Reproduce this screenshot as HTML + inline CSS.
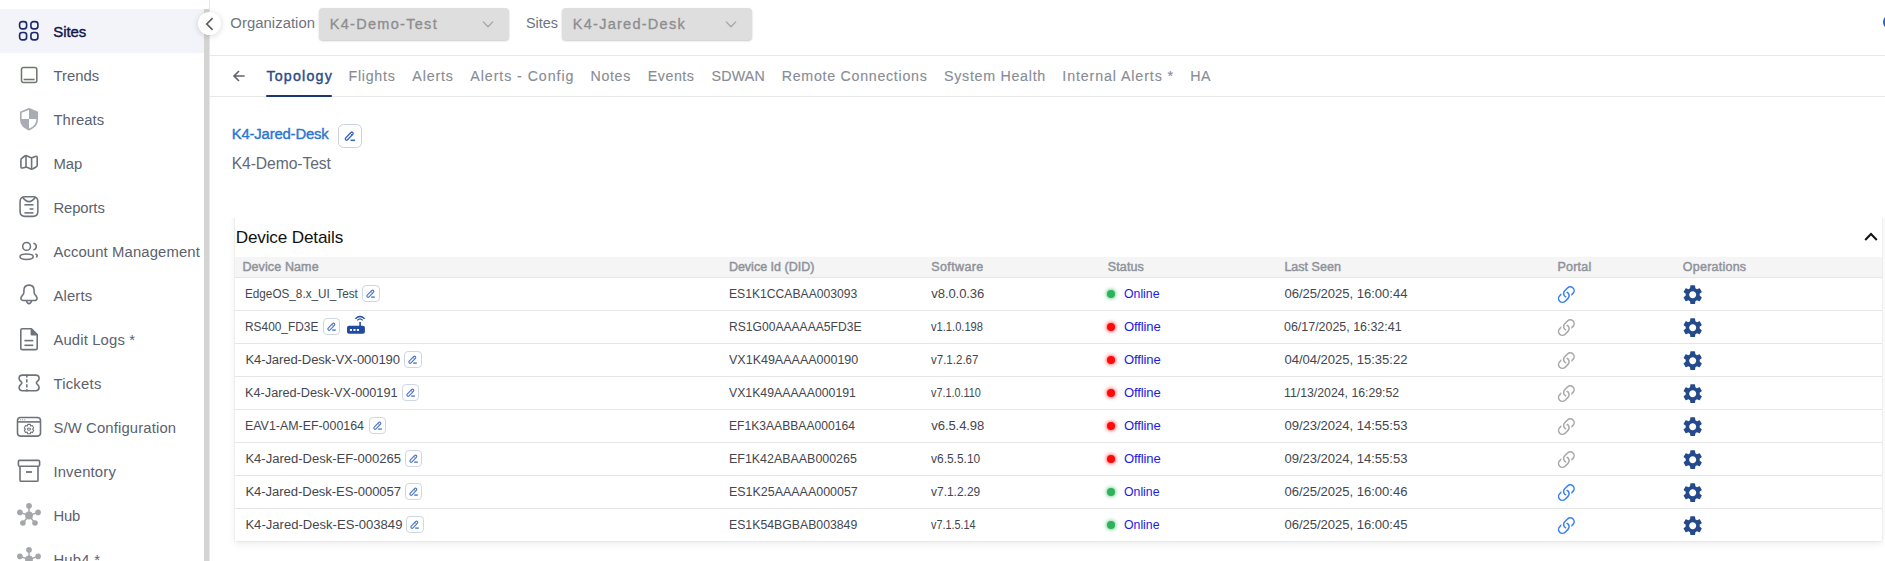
<!DOCTYPE html>
<html><head><meta charset="utf-8"><style>
html,body{margin:0;padding:0;width:1885px;height:561px;overflow:hidden;background:#fff;}
body{position:relative;font-family:"Liberation Sans",sans-serif;}
.t{position:absolute;white-space:nowrap;line-height:1;}
</style></head><body>
<div style="position:absolute;left:0;top:9px;width:204px;height:44px;background:#f3f4f9"></div>
<div style="position:absolute;left:209px;top:0;width:1px;height:561px;background:#e6e6e6"></div>
<div style="position:absolute;left:204px;top:9px;width:5px;height:552px;background:#d4d4d4"></div>
<div class="t" style="left:53.30px;top:24.52px;font-size:14.97px;color:#15154a;-webkit-text-stroke:0.4px #15154a;letter-spacing:-0.071px;">Sites</div>
<div class="t" style="left:53.40px;top:68.65px;font-size:14.83px;color:#5b616e;letter-spacing:0.022px;">Trends</div>
<div class="t" style="left:53.40px;top:112.65px;font-size:14.83px;color:#5b616e;letter-spacing:0.091px;">Threats</div>
<div class="t" style="left:53.40px;top:156.65px;font-size:14.83px;color:#5b616e;letter-spacing:-0.019px;">Map</div>
<div class="t" style="left:53.40px;top:200.65px;font-size:14.83px;color:#5b616e;letter-spacing:-0.085px;">Reports</div>
<div class="t" style="left:53.40px;top:244.65px;font-size:14.83px;color:#5b616e;letter-spacing:0.129px;">Account Management</div>
<div class="t" style="left:53.40px;top:288.65px;font-size:14.83px;color:#5b616e;letter-spacing:0.181px;">Alerts</div>
<div class="t" style="left:53.40px;top:332.65px;font-size:14.83px;color:#5b616e;letter-spacing:0.150px;">Audit Logs *</div>
<div class="t" style="left:53.40px;top:376.65px;font-size:14.83px;color:#5b616e;letter-spacing:0.250px;">Tickets</div>
<div class="t" style="left:53.40px;top:420.65px;font-size:14.83px;color:#5b616e;letter-spacing:0.144px;">S/W Configuration</div>
<div class="t" style="left:53.40px;top:464.65px;font-size:14.83px;color:#5b616e;letter-spacing:0.178px;">Inventory</div>
<div class="t" style="left:53.40px;top:508.65px;font-size:14.83px;color:#5b616e;letter-spacing:-0.198px;">Hub</div>
<div class="t" style="left:53.40px;top:552.65px;font-size:14.83px;color:#5b616e;letter-spacing:0.254px;">Hub4 *</div>
<svg style="position:absolute;left:18px;top:20px" width="22" height="22" viewBox="0 0 22 22" fill="none" stroke="#1f2870" stroke-width="1.65"><rect x="1.6" y="1.6" width="7" height="7.3" rx="2.6"/><rect x="12.9" y="1.6" width="7" height="7.3" rx="2.6"/><rect x="1.6" y="12.5" width="7" height="7.4" rx="2.6"/><rect x="12.9" y="12.5" width="7" height="7.4" rx="2.6"/></svg>
<svg style="position:absolute;left:19px;top:65px" width="20" height="20" viewBox="0 0 20 20" fill="none" stroke="#6f786f" stroke-width="1.55"><rect x="2.5" y="2.5" width="15.3" height="15" rx="2"/><line x1="4.6" y1="14.5" x2="15.6" y2="14.5"/></svg>
<svg style="position:absolute;left:19px;top:107px" width="20" height="24" viewBox="0 0 20 24"><path d="M10 1.9 L18.2 5.2 V12 C18.2 17 14.6 20.8 10 22.6 C5.4 20.8 1.8 17 1.8 12 V5.2 Z" fill="none" stroke="#a9acb2" stroke-width="1.7" stroke-linejoin="round"/><path d="M10 1.9 L18.2 5.2 V12 H10 Z" fill="#a9acb2"/><path d="M10 12 H1.8 C1.8 17 5.4 20.8 10 22.6 Z" fill="#a9acb2"/></svg>
<svg style="position:absolute;left:19px;top:153px" width="20" height="20" viewBox="0 0 20 20" fill="none" stroke="#6e737b" stroke-width="1.6" stroke-linejoin="round"><path d="M1.9 7 Q1.9 5.6 3.2 5 L5.8 3 Q7 2.3 8.2 3 L11.4 4.4 Q12.6 5 13.8 4.4 L16.2 3.4 Q18.2 2.8 18.2 4.6 V12.4 Q18.2 13.4 17 14 L14 15.8 Q12.6 16.4 11.2 15.8 L8.4 14.4 Q7 14 5.6 14.4 L3.6 15 Q1.9 15.4 1.9 13.6 Z"/><line x1="7" y1="2.6" x2="7" y2="14.2"/><line x1="12.6" y1="4.7" x2="12.6" y2="16.1"/></svg>
<svg style="position:absolute;left:19px;top:195px" width="21" height="24" viewBox="0 0 21 24" fill="none" stroke="#6e737b" stroke-width="1.55"><path d="M6 1.8 H14 Q18.85 1.8 18.85 6.6 V16.5 Q18.85 21.35 14 21.35 H6 Q1.05 21.35 1.05 16.5 V6.6 Q1.05 1.8 6 1.8 Z"/><path d="M3.6 2.2 Q6.8 6.6 10 6.6 Q13.2 6.6 16.4 2.2"/><line x1="5.4" y1="9.8" x2="14.5" y2="9.8"/><line x1="10.5" y1="14" x2="14.5" y2="14"/><line x1="5.4" y1="17.9" x2="14.5" y2="17.9"/></svg>
<svg style="position:absolute;left:19px;top:241px" width="21" height="21" viewBox="0 0 21 21" fill="none" stroke="#6e737b" stroke-width="1.55" stroke-linecap="butt"><circle cx="7.6" cy="5.4" r="3.9"/><ellipse cx="7.6" cy="15.7" rx="6.6" ry="2.7"/><path d="M14.4 2.3 Q17.3 2.9 17.3 5.6 Q17.3 8.3 14.4 8.9"/><path d="M16.4 12.9 Q19.4 14 17.4 16.4"/></svg>
<svg style="position:absolute;left:19px;top:283px" width="20" height="22" viewBox="0 0 20 22" fill="none" stroke="#6e737b" stroke-width="1.55" stroke-linejoin="round"><path d="M10 2.1 Q15.1 2.1 15.1 7.5 V9.3 Q15.1 10.8 16.4 12.1 Q18.1 13.8 18.1 15.2 Q18.1 17.5 15.4 17.5 H4.6 Q1.9 17.5 1.9 15.2 Q1.9 13.8 3.6 12.1 Q4.9 10.8 4.9 9.3 V7.5 Q4.9 2.1 10 2.1 Z"/><path d="M7.4 17.8 Q8.2 20.6 10 20.6 Q11.8 20.6 12.6 17.8"/></svg>
<svg style="position:absolute;left:19px;top:327px" width="20" height="24" viewBox="0 0 20 24" fill="none" stroke="#6e737b" stroke-width="1.6" stroke-linejoin="round"><path d="M3.2 1.8 H12.4 L18.2 7.6 V21.2 Q18.2 22.6 16.8 22.6 H3.2 Q1.8 22.6 1.8 21.2 V3.2 Q1.8 1.8 3.2 1.8 Z"/><path d="M12.4 1.8 V7.6 H18.2" fill="#6e737b"/><line x1="5.4" y1="13.6" x2="14.3" y2="13.6"/><line x1="5.4" y1="18.3" x2="14.3" y2="18.3"/></svg>
<svg style="position:absolute;left:17px;top:373px" width="24" height="20" viewBox="0 0 24 20" fill="none" stroke="#6e737b" stroke-width="1.6" stroke-linejoin="round"><path d="M5.5 2.1 H18.7 Q22.1 2.1 22.1 5.2 Q22.1 6.9 20.6 8.2 Q19.4 9.2 19.4 9.9 Q19.4 10.6 20.6 11.6 Q22.1 12.9 22.1 14.6 Q22.1 17.7 18.7 17.7 H5.5 Q2.1 17.7 2.1 14.6 Q2.1 12.9 3.6 11.6 Q4.8 10.6 4.8 9.9 Q4.8 9.2 3.6 8.2 Q2.1 6.9 2.1 5.2 Q2.1 2.1 5.5 2.1 Z"/><line x1="9.8" y1="1.3" x2="9.8" y2="18.5" stroke-dasharray="3.1 1.9"/></svg>
<svg style="position:absolute;left:16px;top:416px" width="26" height="23" viewBox="0 0 26 23" fill="none" stroke="#6e737b" stroke-width="1.6"><rect x="1.5" y="1.5" width="23" height="18.6" rx="3"/><line x1="1.5" y1="5.9" x2="24.5" y2="5.9"/><circle cx="4.6" cy="3.7" r="0.55" fill="#6e737b" stroke="none"/><circle cx="6.7" cy="3.7" r="0.55" fill="#6e737b" stroke="none"/><circle cx="8.8" cy="3.7" r="0.55" fill="#6e737b" stroke="none"/><ellipse cx="13" cy="13.1" rx="1.6" ry="1.1" stroke-width="1.1"/><path d="M11.65 8.39 L14.35 8.39 L14.70 10.04 L14.80 10.10 L16.40 9.58 L17.75 11.91 L16.50 13.04 L16.50 13.16 L17.75 14.29 L16.40 16.62 L14.80 16.10 L14.70 16.16 L14.35 17.81 L11.65 17.81 L11.30 16.16 L11.20 16.10 L9.60 16.62 L8.25 14.29 L9.50 13.16 L9.50 13.04 L8.25 11.91 L9.60 9.58 L11.20 10.10 L11.30 10.04 Z" stroke-width="1.05" stroke-linejoin="round"/></svg>
<svg style="position:absolute;left:17px;top:458px" width="24" height="25" viewBox="0 0 24 25" fill="none" stroke="#6e737b" stroke-width="1.6" stroke-linejoin="round"><rect x="1.4" y="2.4" width="21.2" height="5.8" rx="1.2"/><path d="M3 8.2 V22.2 Q3 23.3 4.1 23.3 H19.9 Q21 23.3 21 22.2 V8.2"/><line x1="9" y1="14" x2="15" y2="14" stroke-width="1.8"/></svg>
<svg style="position:absolute;left:16px;top:502px" width="26" height="25" viewBox="0 0 26 25"><g stroke="#a4a6aa" stroke-width="1.5"><line x1="13" y1="13.5" x2="13" y2="3.8"/><line x1="13" y1="13.5" x2="3.9" y2="10.4"/><line x1="13" y1="13.5" x2="22.1" y2="10.4"/><line x1="13" y1="13.5" x2="6.9" y2="21"/><line x1="13" y1="13.5" x2="19" y2="21"/></g><g fill="#a4a6aa"><circle cx="13" cy="13.5" r="3.9"/><circle cx="13" cy="3.8" r="2.9"/><circle cx="3.9" cy="10.4" r="2.8"/><circle cx="22.1" cy="10.4" r="2.8"/><circle cx="6.9" cy="21" r="2.8"/><circle cx="19" cy="21" r="2.8"/></g></svg>
<svg style="position:absolute;left:16px;top:546px" width="26" height="25" viewBox="0 0 26 25"><g stroke="#a4a6aa" stroke-width="1.5"><line x1="13" y1="13.5" x2="13" y2="3.8"/><line x1="13" y1="13.5" x2="3.9" y2="10.4"/><line x1="13" y1="13.5" x2="22.1" y2="10.4"/><line x1="13" y1="13.5" x2="6.9" y2="21"/><line x1="13" y1="13.5" x2="19" y2="21"/></g><g fill="#a4a6aa"><circle cx="13" cy="13.5" r="3.9"/><circle cx="13" cy="3.8" r="2.9"/><circle cx="3.9" cy="10.4" r="2.8"/><circle cx="22.1" cy="10.4" r="2.8"/><circle cx="6.9" cy="21" r="2.8"/><circle cx="19" cy="21" r="2.8"/></g></svg>
<div style="position:absolute;left:197.5px;top:11.8px;width:23px;height:23px;border-radius:50%;background:#fff;box-shadow:0 1px 6px rgba(0,0,0,0.16)"></div>
<svg style="position:absolute;left:203px;top:16px" width="14" height="16" viewBox="0 0 14 16" fill="none" stroke="#5c5c5c" stroke-width="1.7" stroke-linecap="butt"><path d="M9.6 2.2 L3.8 8 L9.6 13.8"/></svg>
<div style="position:absolute;left:210px;top:55px;width:1675px;height:1px;background:#e8e8e8"></div>
<div class="t" style="left:230.30px;top:16.25px;font-size:14.83px;color:#6e747f;letter-spacing:0.059px;">Organization</div>
<div style="position:absolute;left:319px;top:8px;width:190px;height:32px;border-radius:4px;background:#dedede;box-shadow:0 1px 2px rgba(0,0,0,0.22)"></div>
<div class="t" style="left:329.80px;top:16.89px;font-size:14.53px;color:#8d8d8f;-webkit-text-stroke:0.3px #8d8d8f;letter-spacing:1.283px;">K4-Demo-Test</div>
<svg style="position:absolute;left:482px;top:19px" width="12" height="11" viewBox="0 0 12 11" fill="none" stroke="#a6a6a8" stroke-width="1.3"><path d="M1 2.6 L6 7.8 L11 2.6"/></svg>
<div class="t" style="left:525.60px;top:16.25px;font-size:14.83px;color:#6e747f;transform:scaleX(0.9709);transform-origin:0 0;">Sites</div>
<div style="position:absolute;left:562px;top:8px;width:190px;height:32px;border-radius:4px;background:#dedede;box-shadow:0 1px 2px rgba(0,0,0,0.22)"></div>
<div class="t" style="left:572.80px;top:16.89px;font-size:14.53px;color:#8d8d8f;-webkit-text-stroke:0.3px #8d8d8f;letter-spacing:1.256px;">K4-Jared-Desk</div>
<svg style="position:absolute;left:725px;top:19px" width="12" height="11" viewBox="0 0 12 11" fill="none" stroke="#a6a6a8" stroke-width="1.3"><path d="M1 2.6 L6 7.8 L11 2.6"/></svg>
<div style="position:absolute;left:1883px;top:14.5px;width:14.5px;height:14.5px;border-radius:50%;background:#2563c0"></div>
<div style="position:absolute;left:210px;top:96px;width:1675px;height:1px;background:#e8e8e8"></div>
<svg style="position:absolute;left:231.8px;top:69px" width="14" height="14" viewBox="0 0 14 14" fill="none" stroke="#5f636b" stroke-width="1.6"><path d="M12.6 7 H2.2 M7 2 L2 7 L7 12"/></svg>
<div class="t" style="left:266.40px;top:68.54px;font-size:14.24px;color:#2b4b8a;-webkit-text-stroke:0.4px #2b4b8a;letter-spacing:1.198px;">Topology</div>
<div class="t" style="left:348.60px;top:68.54px;font-size:14.24px;color:#878c95;-webkit-text-stroke:0.12px #878c95;letter-spacing:0.708px;">Flights</div>
<div class="t" style="left:412.30px;top:68.54px;font-size:14.24px;color:#878c95;-webkit-text-stroke:0.12px #878c95;letter-spacing:0.858px;">Alerts</div>
<div class="t" style="left:470.30px;top:68.54px;font-size:14.24px;color:#878c95;-webkit-text-stroke:0.12px #878c95;letter-spacing:0.926px;">Alerts - Config</div>
<div class="t" style="left:590.60px;top:68.54px;font-size:14.24px;color:#878c95;-webkit-text-stroke:0.12px #878c95;letter-spacing:0.623px;">Notes</div>
<div class="t" style="left:647.80px;top:68.54px;font-size:14.24px;color:#878c95;-webkit-text-stroke:0.12px #878c95;letter-spacing:0.531px;">Events</div>
<div class="t" style="left:711.50px;top:68.54px;font-size:14.24px;color:#878c95;-webkit-text-stroke:0.12px #878c95;letter-spacing:0.176px;">SDWAN</div>
<div class="t" style="left:781.70px;top:68.54px;font-size:14.24px;color:#878c95;-webkit-text-stroke:0.12px #878c95;letter-spacing:0.717px;">Remote Connections</div>
<div class="t" style="left:944.00px;top:68.54px;font-size:14.24px;color:#878c95;-webkit-text-stroke:0.12px #878c95;letter-spacing:0.723px;">System Health</div>
<div class="t" style="left:1062.30px;top:68.54px;font-size:14.24px;color:#878c95;-webkit-text-stroke:0.12px #878c95;letter-spacing:0.888px;">Internal Alerts *</div>
<div class="t" style="left:1190.20px;top:68.54px;font-size:14.24px;color:#878c95;-webkit-text-stroke:0.12px #878c95;letter-spacing:0.512px;">HA</div>
<div style="position:absolute;left:266px;top:95px;width:66px;height:2px;background:#1c3672;border-radius:1px"></div>
<div class="t" style="left:231.70px;top:126.55px;font-size:14.83px;color:#2a76d2;-webkit-text-stroke:0.4px #2a76d2;letter-spacing:-0.155px;">K4-Jared-Desk</div>
<div style="position:absolute;left:337.5px;top:123.5px;width:22px;height:22px;border:1px solid #c9d2e2;border-radius:5.5px;box-sizing:content-box"></div>
<svg style="position:absolute;left:337.5px;top:123.5px" width="25" height="25" viewBox="0 0 25 25" fill="none" stroke="#3a66c4" stroke-width="1.3"><rect x="6.10" y="10.85" width="10.2" height="2.6" rx="1.30" transform="rotate(-46 11.2 12.15)"/><line x1="14.00" y1="10.85" x2="14.00" y2="13.45" transform="rotate(-46 11.2 12.15)" stroke-width="0.9"/><line x1="12.5" y1="16.3" x2="17.1" y2="16.3" stroke-width="1.55"/></svg>
<div class="t" style="left:231.70px;top:155.61px;font-size:15.70px;color:#646977;letter-spacing:-0.092px;">K4-Demo-Test</div>
<div style="position:absolute;left:215px;top:218px;width:1670px;height:343px;overflow:hidden"><div style="position:absolute;left:20px;top:-20px;width:1647px;height:343px;background:#fff;box-shadow:0 0 1.5px rgba(0,0,0,0.14),0 3px 7px rgba(0,0,0,0.08)"></div></div>
<div class="t" style="left:235.70px;top:228.58px;font-size:17.15px;color:#111111;letter-spacing:-0.155px;">Device Details</div>
<svg style="position:absolute;left:1863px;top:230px" width="16" height="12" viewBox="0 0 16 12" fill="none" stroke="#111" stroke-width="2"><path d="M2.2 10 L8 4 L13.8 10"/></svg>
<div style="position:absolute;left:235px;top:257px;width:1647px;height:20px;background:#f5f5f5"></div>
<div style="position:absolute;left:235px;top:277px;width:1647px;height:1px;background:#e6e6e6"></div>
<div class="t" style="left:242.40px;top:260.62px;font-size:12.50px;color:#8e929a;-webkit-text-stroke:0.45px #8e929a;letter-spacing:0.118px;">Device Name</div>
<div class="t" style="left:728.90px;top:260.62px;font-size:12.50px;color:#8e929a;-webkit-text-stroke:0.45px #8e929a;">Device Id (DID)</div>
<div class="t" style="left:931.30px;top:260.62px;font-size:12.50px;color:#8e929a;-webkit-text-stroke:0.45px #8e929a;letter-spacing:0.382px;">Software</div>
<div class="t" style="left:1107.80px;top:260.62px;font-size:12.50px;color:#8e929a;-webkit-text-stroke:0.45px #8e929a;letter-spacing:0.113px;">Status</div>
<div class="t" style="left:1284.40px;top:260.62px;font-size:12.50px;color:#8e929a;-webkit-text-stroke:0.45px #8e929a;letter-spacing:0.026px;">Last Seen</div>
<div class="t" style="left:1557.50px;top:260.62px;font-size:12.50px;color:#8e929a;-webkit-text-stroke:0.45px #8e929a;letter-spacing:0.210px;">Portal</div>
<div class="t" style="left:1682.80px;top:260.62px;font-size:12.50px;color:#8e929a;-webkit-text-stroke:0.45px #8e929a;letter-spacing:0.240px;">Operations</div>
<div style="position:absolute;left:235px;top:310px;width:1647px;height:1px;background:#e6e6e6"></div>
<div class="t" style="left:245.40px;top:287.12px;font-size:13.08px;color:#44464f;transform:scaleX(0.8967);transform-origin:0 0;">EdgeOS_8.x_UI_Test</div>
<div style="position:absolute;left:362.4px;top:285.2px;width:15.3px;height:15.3px;border:1px solid #cfd6e4;border-radius:4px;box-sizing:content-box"></div>
<svg style="position:absolute;left:362.4px;top:285.2px" width="18" height="18" viewBox="0 0 18 18" fill="none" stroke="#4d77c6" stroke-width="1.15"><rect x="3.90" y="7.45" width="8.8" height="2.5" rx="1.25" transform="rotate(-46 8.3 8.7)"/><line x1="10.40" y1="7.45" x2="10.40" y2="9.95" transform="rotate(-46 8.3 8.7)" stroke-width="0.9"/><line x1="9.2" y1="12.1" x2="12.8" y2="12.1" stroke-width="1.4"/></svg>
<div class="t" style="left:728.90px;top:287.12px;font-size:13.08px;color:#44464f;transform:scaleX(0.9286);transform-origin:0 0;">ES1K1CCABAA003093</div>
<div class="t" style="left:931.30px;top:287.12px;font-size:13.08px;color:#44464f;letter-spacing:-0.102px;">v8.0.0.36</div>
<div style="position:absolute;left:1107px;top:290px;width:8px;height:8px;border-radius:50%;background:#2eb35a;box-shadow:0 0 4px #2eb35a"></div>
<div class="t" style="left:1123.90px;top:287.12px;font-size:13.08px;color:#1b1be6;transform:scaleX(0.9389);transform-origin:0 0;">Online</div>
<div class="t" style="left:1284.40px;top:287.12px;font-size:13.08px;color:#44464f;letter-spacing:-0.029px;">06/25/2025, 16:00:44</div>
<svg style="position:absolute;left:1554.2px;top:282.5px" width="24.7" height="24.7" viewBox="0 0 16 16" fill="#3b82f0"><path d="M4.715 6.542 3.343 7.914a3 3 0 1 0 4.243 4.243l1.828-1.829A3 3 0 0 0 8.586 5.5L8 6.086a1 1 0 0 0-.154.199 2 2 0 0 1 .861 3.337L6.88 11.45a2 2 0 1 1-2.83-2.83l.793-.792a4 4 0 0 1-.128-1.287z"/><path d="M6.586 4.672A3 3 0 0 0 7.414 9.5l.775-.776a2 2 0 0 1-.896-3.346L9.12 3.55a2 2 0 1 1 2.83 2.83l-.793.792c.112.42.155.855.128 1.287l1.372-1.372a3 3 0 1 0-4.243-4.243z"/></svg>
<svg style="position:absolute;left:1680.6px;top:282.9px" width="23.4" height="23.4" viewBox="0 0 24 24"><path fill="#244a8c" d="M19.14 12.94c.04-.3.06-.61.06-.94 0-.32-.02-.64-.07-.94l2.03-1.58a.49.49 0 0 0 .12-.61l-1.92-3.32a.488.488 0 0 0-.59-.22l-2.39.96c-.5-.38-1.03-.7-1.62-.94l-.36-2.54a.484.484 0 0 0-.48-.41h-3.84c-.24 0-.43.17-.47.41l-.36 2.54c-.59.24-1.13.57-1.62.94l-2.39-.96c-.22-.08-.47 0-.59.22L2.74 8.87c-.12.21-.08.47.12.61l2.03 1.58c-.05.3-.09.63-.09.94s.02.64.07.94l-2.03 1.58a.49.49 0 0 0-.12.61l1.92 3.32c.12.22.37.29.59.22l2.39-.96c.5.38 1.03.7 1.62.94l.36 2.54c.05.24.24.41.48.41h3.84c.24 0 .44-.17.47-.41l.36-2.54c.59-.24 1.13-.56 1.62-.94l2.39.96c.22.08.47 0 .59-.22l1.92-3.32c.12-.22.07-.47-.12-.61l-2.01-1.58zM12 15.6c-1.98 0-3.6-1.62-3.6-3.6s1.62-3.6 3.6-3.6 3.6 1.62 3.6 3.6-1.62 3.6-3.6 3.6z"/></svg>
<div style="position:absolute;left:235px;top:343px;width:1647px;height:1px;background:#e6e6e6"></div>
<div class="t" style="left:245.40px;top:320.12px;font-size:13.08px;color:#44464f;transform:scaleX(0.9094);transform-origin:0 0;">RS400_FD3E</div>
<div style="position:absolute;left:322.8px;top:318.2px;width:15.3px;height:15.3px;border:1px solid #cfd6e4;border-radius:4px;box-sizing:content-box"></div>
<svg style="position:absolute;left:322.8px;top:318.2px" width="18" height="18" viewBox="0 0 18 18" fill="none" stroke="#4d77c6" stroke-width="1.15"><rect x="3.90" y="7.45" width="8.8" height="2.5" rx="1.25" transform="rotate(-46 8.3 8.7)"/><line x1="10.40" y1="7.45" x2="10.40" y2="9.95" transform="rotate(-46 8.3 8.7)" stroke-width="0.9"/><line x1="9.2" y1="12.1" x2="12.8" y2="12.1" stroke-width="1.4"/></svg>
<svg style="position:absolute;left:346px;top:315px" width="20" height="20" viewBox="0 0 20 20"><rect x="1" y="10.8" width="17.9" height="8" rx="2" fill="#1f4aa0"/><rect x="13.3" y="7" width="1.6" height="4.5" fill="#1f4aa0"/><path d="M9.4 3.7 Q14 -0.6 18.6 3.7" stroke="#1f4aa0" stroke-width="1.3" fill="none"/><path d="M11.3 5.3 Q14 2.6 16.7 5.3" stroke="#1f4aa0" stroke-width="1.2" fill="none"/><rect x="3.9" y="14" width="2.1" height="1.9" fill="#fff"/><rect x="7.4" y="14" width="2.1" height="1.9" fill="#fff"/><rect x="10.9" y="14" width="2.1" height="1.9" fill="#fff"/></svg>
<div class="t" style="left:728.90px;top:320.12px;font-size:13.08px;color:#44464f;transform:scaleX(0.9250);transform-origin:0 0;">RS1G00AAAAAA5FD3E</div>
<div class="t" style="left:931.30px;top:320.12px;font-size:13.08px;color:#44464f;transform:scaleX(0.8512);transform-origin:0 0;">v1.1.0.198</div>
<div style="position:absolute;left:1107px;top:323px;width:8px;height:8px;border-radius:50%;background:#ff0a0a;box-shadow:0 0 4px #ff0a0a"></div>
<div class="t" style="left:1123.90px;top:320.12px;font-size:13.08px;color:#1b1be6;letter-spacing:-0.111px;">Offline</div>
<div class="t" style="left:1284.40px;top:320.12px;font-size:13.08px;color:#44464f;transform:scaleX(0.9511);transform-origin:0 0;">06/17/2025, 16:32:41</div>
<svg style="position:absolute;left:1554.2px;top:315.5px" width="24.7" height="24.7" viewBox="0 0 16 16" fill="#a8a8a8"><path d="M4.715 6.542 3.343 7.914a3 3 0 1 0 4.243 4.243l1.828-1.829A3 3 0 0 0 8.586 5.5L8 6.086a1 1 0 0 0-.154.199 2 2 0 0 1 .861 3.337L6.88 11.45a2 2 0 1 1-2.83-2.83l.793-.792a4 4 0 0 1-.128-1.287z"/><path d="M6.586 4.672A3 3 0 0 0 7.414 9.5l.775-.776a2 2 0 0 1-.896-3.346L9.12 3.55a2 2 0 1 1 2.83 2.83l-.793.792c.112.42.155.855.128 1.287l1.372-1.372a3 3 0 1 0-4.243-4.243z"/></svg>
<svg style="position:absolute;left:1680.6px;top:315.9px" width="23.4" height="23.4" viewBox="0 0 24 24"><path fill="#244a8c" d="M19.14 12.94c.04-.3.06-.61.06-.94 0-.32-.02-.64-.07-.94l2.03-1.58a.49.49 0 0 0 .12-.61l-1.92-3.32a.488.488 0 0 0-.59-.22l-2.39.96c-.5-.38-1.03-.7-1.62-.94l-.36-2.54a.484.484 0 0 0-.48-.41h-3.84c-.24 0-.43.17-.47.41l-.36 2.54c-.59.24-1.13.57-1.62.94l-2.39-.96c-.22-.08-.47 0-.59.22L2.74 8.87c-.12.21-.08.47.12.61l2.03 1.58c-.05.3-.09.63-.09.94s.02.64.07.94l-2.03 1.58a.49.49 0 0 0-.12.61l1.92 3.32c.12.22.37.29.59.22l2.39-.96c.5.38 1.03.7 1.62.94l.36 2.54c.05.24.24.41.48.41h3.84c.24 0 .44-.17.47-.41l.36-2.54c.59-.24 1.13-.56 1.62-.94l2.39.96c.22.08.47 0 .59-.22l1.92-3.32c.12-.22.07-.47-.12-.61l-2.01-1.58zM12 15.6c-1.98 0-3.6-1.62-3.6-3.6s1.62-3.6 3.6-3.6 3.6 1.62 3.6 3.6-1.62 3.6-3.6 3.6z"/></svg>
<div style="position:absolute;left:235px;top:376px;width:1647px;height:1px;background:#e6e6e6"></div>
<div class="t" style="left:245.40px;top:353.12px;font-size:13.08px;color:#44464f;letter-spacing:-0.107px;">K4-Jared-Desk-VX-000190</div>
<div style="position:absolute;left:404.3px;top:351.2px;width:15.3px;height:15.3px;border:1px solid #cfd6e4;border-radius:4px;box-sizing:content-box"></div>
<svg style="position:absolute;left:404.3px;top:351.2px" width="18" height="18" viewBox="0 0 18 18" fill="none" stroke="#4d77c6" stroke-width="1.15"><rect x="3.90" y="7.45" width="8.8" height="2.5" rx="1.25" transform="rotate(-46 8.3 8.7)"/><line x1="10.40" y1="7.45" x2="10.40" y2="9.95" transform="rotate(-46 8.3 8.7)" stroke-width="0.9"/><line x1="9.2" y1="12.1" x2="12.8" y2="12.1" stroke-width="1.4"/></svg>
<div class="t" style="left:728.90px;top:353.12px;font-size:13.08px;color:#44464f;transform:scaleX(0.9558);transform-origin:0 0;">VX1K49AAAAA000190</div>
<div class="t" style="left:931.30px;top:353.12px;font-size:13.08px;color:#44464f;transform:scaleX(0.8808);transform-origin:0 0;">v7.1.2.67</div>
<div style="position:absolute;left:1107px;top:356px;width:8px;height:8px;border-radius:50%;background:#ff0a0a;box-shadow:0 0 4px #ff0a0a"></div>
<div class="t" style="left:1123.90px;top:353.12px;font-size:13.08px;color:#1b1be6;letter-spacing:-0.111px;">Offline</div>
<div class="t" style="left:1284.40px;top:353.12px;font-size:13.08px;color:#44464f;letter-spacing:-0.029px;">04/04/2025, 15:35:22</div>
<svg style="position:absolute;left:1554.2px;top:348.5px" width="24.7" height="24.7" viewBox="0 0 16 16" fill="#a8a8a8"><path d="M4.715 6.542 3.343 7.914a3 3 0 1 0 4.243 4.243l1.828-1.829A3 3 0 0 0 8.586 5.5L8 6.086a1 1 0 0 0-.154.199 2 2 0 0 1 .861 3.337L6.88 11.45a2 2 0 1 1-2.83-2.83l.793-.792a4 4 0 0 1-.128-1.287z"/><path d="M6.586 4.672A3 3 0 0 0 7.414 9.5l.775-.776a2 2 0 0 1-.896-3.346L9.12 3.55a2 2 0 1 1 2.83 2.83l-.793.792c.112.42.155.855.128 1.287l1.372-1.372a3 3 0 1 0-4.243-4.243z"/></svg>
<svg style="position:absolute;left:1680.6px;top:348.9px" width="23.4" height="23.4" viewBox="0 0 24 24"><path fill="#244a8c" d="M19.14 12.94c.04-.3.06-.61.06-.94 0-.32-.02-.64-.07-.94l2.03-1.58a.49.49 0 0 0 .12-.61l-1.92-3.32a.488.488 0 0 0-.59-.22l-2.39.96c-.5-.38-1.03-.7-1.62-.94l-.36-2.54a.484.484 0 0 0-.48-.41h-3.84c-.24 0-.43.17-.47.41l-.36 2.54c-.59.24-1.13.57-1.62.94l-2.39-.96c-.22-.08-.47 0-.59.22L2.74 8.87c-.12.21-.08.47.12.61l2.03 1.58c-.05.3-.09.63-.09.94s.02.64.07.94l-2.03 1.58a.49.49 0 0 0-.12.61l1.92 3.32c.12.22.37.29.59.22l2.39-.96c.5.38 1.03.7 1.62.94l.36 2.54c.05.24.24.41.48.41h3.84c.24 0 .44-.17.47-.41l.36-2.54c.59-.24 1.13-.56 1.62-.94l2.39.96c.22.08.47 0 .59-.22l1.92-3.32c.12-.22.07-.47-.12-.61l-2.01-1.58zM12 15.6c-1.98 0-3.6-1.62-3.6-3.6s1.62-3.6 3.6-3.6 3.6 1.62 3.6 3.6-1.62 3.6-3.6 3.6z"/></svg>
<div style="position:absolute;left:235px;top:409px;width:1647px;height:1px;background:#e6e6e6"></div>
<div class="t" style="left:245.40px;top:386.12px;font-size:13.08px;color:#44464f;transform:scaleX(0.9717);transform-origin:0 0;">K4-Jared-Desk-VX-000191</div>
<div style="position:absolute;left:401.9px;top:384.2px;width:15.3px;height:15.3px;border:1px solid #cfd6e4;border-radius:4px;box-sizing:content-box"></div>
<svg style="position:absolute;left:401.9px;top:384.2px" width="18" height="18" viewBox="0 0 18 18" fill="none" stroke="#4d77c6" stroke-width="1.15"><rect x="3.90" y="7.45" width="8.8" height="2.5" rx="1.25" transform="rotate(-46 8.3 8.7)"/><line x1="10.40" y1="7.45" x2="10.40" y2="9.95" transform="rotate(-46 8.3 8.7)" stroke-width="0.9"/><line x1="9.2" y1="12.1" x2="12.8" y2="12.1" stroke-width="1.4"/></svg>
<div class="t" style="left:728.90px;top:386.12px;font-size:13.08px;color:#44464f;transform:scaleX(0.9381);transform-origin:0 0;">VX1K49AAAAA000191</div>
<div class="t" style="left:931.30px;top:386.12px;font-size:13.08px;color:#44464f;transform:scaleX(0.8267);transform-origin:0 0;">v7.1.0.110</div>
<div style="position:absolute;left:1107px;top:389px;width:8px;height:8px;border-radius:50%;background:#ff0a0a;box-shadow:0 0 4px #ff0a0a"></div>
<div class="t" style="left:1123.90px;top:386.12px;font-size:13.08px;color:#1b1be6;letter-spacing:-0.111px;">Offline</div>
<div class="t" style="left:1284.40px;top:386.12px;font-size:13.08px;color:#44464f;transform:scaleX(0.9391);transform-origin:0 0;">11/13/2024, 16:29:52</div>
<svg style="position:absolute;left:1554.2px;top:381.5px" width="24.7" height="24.7" viewBox="0 0 16 16" fill="#a8a8a8"><path d="M4.715 6.542 3.343 7.914a3 3 0 1 0 4.243 4.243l1.828-1.829A3 3 0 0 0 8.586 5.5L8 6.086a1 1 0 0 0-.154.199 2 2 0 0 1 .861 3.337L6.88 11.45a2 2 0 1 1-2.83-2.83l.793-.792a4 4 0 0 1-.128-1.287z"/><path d="M6.586 4.672A3 3 0 0 0 7.414 9.5l.775-.776a2 2 0 0 1-.896-3.346L9.12 3.55a2 2 0 1 1 2.83 2.83l-.793.792c.112.42.155.855.128 1.287l1.372-1.372a3 3 0 1 0-4.243-4.243z"/></svg>
<svg style="position:absolute;left:1680.6px;top:381.9px" width="23.4" height="23.4" viewBox="0 0 24 24"><path fill="#244a8c" d="M19.14 12.94c.04-.3.06-.61.06-.94 0-.32-.02-.64-.07-.94l2.03-1.58a.49.49 0 0 0 .12-.61l-1.92-3.32a.488.488 0 0 0-.59-.22l-2.39.96c-.5-.38-1.03-.7-1.62-.94l-.36-2.54a.484.484 0 0 0-.48-.41h-3.84c-.24 0-.43.17-.47.41l-.36 2.54c-.59.24-1.13.57-1.62.94l-2.39-.96c-.22-.08-.47 0-.59.22L2.74 8.87c-.12.21-.08.47.12.61l2.03 1.58c-.05.3-.09.63-.09.94s.02.64.07.94l-2.03 1.58a.49.49 0 0 0-.12.61l1.92 3.32c.12.22.37.29.59.22l2.39-.96c.5.38 1.03.7 1.62.94l.36 2.54c.05.24.24.41.48.41h3.84c.24 0 .44-.17.47-.41l.36-2.54c.59-.24 1.13-.56 1.62-.94l2.39.96c.22.08.47 0 .59-.22l1.92-3.32c.12-.22.07-.47-.12-.61l-2.01-1.58zM12 15.6c-1.98 0-3.6-1.62-3.6-3.6s1.62-3.6 3.6-3.6 3.6 1.62 3.6 3.6-1.62 3.6-3.6 3.6z"/></svg>
<div style="position:absolute;left:235px;top:442px;width:1647px;height:1px;background:#e6e6e6"></div>
<div class="t" style="left:245.40px;top:419.12px;font-size:13.08px;color:#44464f;transform:scaleX(0.9480);transform-origin:0 0;">EAV1-AM-EF-000164</div>
<div style="position:absolute;left:368.6px;top:417.2px;width:15.3px;height:15.3px;border:1px solid #cfd6e4;border-radius:4px;box-sizing:content-box"></div>
<svg style="position:absolute;left:368.6px;top:417.2px" width="18" height="18" viewBox="0 0 18 18" fill="none" stroke="#4d77c6" stroke-width="1.15"><rect x="3.90" y="7.45" width="8.8" height="2.5" rx="1.25" transform="rotate(-46 8.3 8.7)"/><line x1="10.40" y1="7.45" x2="10.40" y2="9.95" transform="rotate(-46 8.3 8.7)" stroke-width="0.9"/><line x1="9.2" y1="12.1" x2="12.8" y2="12.1" stroke-width="1.4"/></svg>
<div class="t" style="left:728.90px;top:419.12px;font-size:13.08px;color:#44464f;transform:scaleX(0.9265);transform-origin:0 0;">EF1K3AABBAA000164</div>
<div class="t" style="left:931.30px;top:419.12px;font-size:13.08px;color:#44464f;letter-spacing:-0.102px;">v6.5.4.98</div>
<div style="position:absolute;left:1107px;top:422px;width:8px;height:8px;border-radius:50%;background:#ff0a0a;box-shadow:0 0 4px #ff0a0a"></div>
<div class="t" style="left:1123.90px;top:419.12px;font-size:13.08px;color:#1b1be6;letter-spacing:-0.111px;">Offline</div>
<div class="t" style="left:1284.40px;top:419.12px;font-size:13.08px;color:#44464f;letter-spacing:-0.029px;">09/23/2024, 14:55:53</div>
<svg style="position:absolute;left:1554.2px;top:414.5px" width="24.7" height="24.7" viewBox="0 0 16 16" fill="#a8a8a8"><path d="M4.715 6.542 3.343 7.914a3 3 0 1 0 4.243 4.243l1.828-1.829A3 3 0 0 0 8.586 5.5L8 6.086a1 1 0 0 0-.154.199 2 2 0 0 1 .861 3.337L6.88 11.45a2 2 0 1 1-2.83-2.83l.793-.792a4 4 0 0 1-.128-1.287z"/><path d="M6.586 4.672A3 3 0 0 0 7.414 9.5l.775-.776a2 2 0 0 1-.896-3.346L9.12 3.55a2 2 0 1 1 2.83 2.83l-.793.792c.112.42.155.855.128 1.287l1.372-1.372a3 3 0 1 0-4.243-4.243z"/></svg>
<svg style="position:absolute;left:1680.6px;top:414.9px" width="23.4" height="23.4" viewBox="0 0 24 24"><path fill="#244a8c" d="M19.14 12.94c.04-.3.06-.61.06-.94 0-.32-.02-.64-.07-.94l2.03-1.58a.49.49 0 0 0 .12-.61l-1.92-3.32a.488.488 0 0 0-.59-.22l-2.39.96c-.5-.38-1.03-.7-1.62-.94l-.36-2.54a.484.484 0 0 0-.48-.41h-3.84c-.24 0-.43.17-.47.41l-.36 2.54c-.59.24-1.13.57-1.62.94l-2.39-.96c-.22-.08-.47 0-.59.22L2.74 8.87c-.12.21-.08.47.12.61l2.03 1.58c-.05.3-.09.63-.09.94s.02.64.07.94l-2.03 1.58a.49.49 0 0 0-.12.61l1.92 3.32c.12.22.37.29.59.22l2.39-.96c.5.38 1.03.7 1.62.94l.36 2.54c.05.24.24.41.48.41h3.84c.24 0 .44-.17.47-.41l.36-2.54c.59-.24 1.13-.56 1.62-.94l2.39.96c.22.08.47 0 .59-.22l1.92-3.32c.12-.22.07-.47-.12-.61l-2.01-1.58zM12 15.6c-1.98 0-3.6-1.62-3.6-3.6s1.62-3.6 3.6-3.6 3.6 1.62 3.6 3.6-1.62 3.6-3.6 3.6z"/></svg>
<div style="position:absolute;left:235px;top:475px;width:1647px;height:1px;background:#e6e6e6"></div>
<div class="t" style="left:245.40px;top:452.12px;font-size:13.08px;color:#44464f;letter-spacing:-0.028px;">K4-Jared-Desk-EF-000265</div>
<div style="position:absolute;left:405.2px;top:450.2px;width:15.3px;height:15.3px;border:1px solid #cfd6e4;border-radius:4px;box-sizing:content-box"></div>
<svg style="position:absolute;left:405.2px;top:450.2px" width="18" height="18" viewBox="0 0 18 18" fill="none" stroke="#4d77c6" stroke-width="1.15"><rect x="3.90" y="7.45" width="8.8" height="2.5" rx="1.25" transform="rotate(-46 8.3 8.7)"/><line x1="10.40" y1="7.45" x2="10.40" y2="9.95" transform="rotate(-46 8.3 8.7)" stroke-width="0.9"/><line x1="9.2" y1="12.1" x2="12.8" y2="12.1" stroke-width="1.4"/></svg>
<div class="t" style="left:728.90px;top:452.12px;font-size:13.08px;color:#44464f;transform:scaleX(0.9506);transform-origin:0 0;">EF1K42ABAAB000265</div>
<div class="t" style="left:931.30px;top:452.12px;font-size:13.08px;color:#44464f;transform:scaleX(0.9142);transform-origin:0 0;">v6.5.5.10</div>
<div style="position:absolute;left:1107px;top:455px;width:8px;height:8px;border-radius:50%;background:#ff0a0a;box-shadow:0 0 4px #ff0a0a"></div>
<div class="t" style="left:1123.90px;top:452.12px;font-size:13.08px;color:#1b1be6;letter-spacing:-0.111px;">Offline</div>
<div class="t" style="left:1284.40px;top:452.12px;font-size:13.08px;color:#44464f;letter-spacing:-0.029px;">09/23/2024, 14:55:53</div>
<svg style="position:absolute;left:1554.2px;top:447.5px" width="24.7" height="24.7" viewBox="0 0 16 16" fill="#a8a8a8"><path d="M4.715 6.542 3.343 7.914a3 3 0 1 0 4.243 4.243l1.828-1.829A3 3 0 0 0 8.586 5.5L8 6.086a1 1 0 0 0-.154.199 2 2 0 0 1 .861 3.337L6.88 11.45a2 2 0 1 1-2.83-2.83l.793-.792a4 4 0 0 1-.128-1.287z"/><path d="M6.586 4.672A3 3 0 0 0 7.414 9.5l.775-.776a2 2 0 0 1-.896-3.346L9.12 3.55a2 2 0 1 1 2.83 2.83l-.793.792c.112.42.155.855.128 1.287l1.372-1.372a3 3 0 1 0-4.243-4.243z"/></svg>
<svg style="position:absolute;left:1680.6px;top:447.9px" width="23.4" height="23.4" viewBox="0 0 24 24"><path fill="#244a8c" d="M19.14 12.94c.04-.3.06-.61.06-.94 0-.32-.02-.64-.07-.94l2.03-1.58a.49.49 0 0 0 .12-.61l-1.92-3.32a.488.488 0 0 0-.59-.22l-2.39.96c-.5-.38-1.03-.7-1.62-.94l-.36-2.54a.484.484 0 0 0-.48-.41h-3.84c-.24 0-.43.17-.47.41l-.36 2.54c-.59.24-1.13.57-1.62.94l-2.39-.96c-.22-.08-.47 0-.59.22L2.74 8.87c-.12.21-.08.47.12.61l2.03 1.58c-.05.3-.09.63-.09.94s.02.64.07.94l-2.03 1.58a.49.49 0 0 0-.12.61l1.92 3.32c.12.22.37.29.59.22l2.39-.96c.5.38 1.03.7 1.62.94l.36 2.54c.05.24.24.41.48.41h3.84c.24 0 .44-.17.47-.41l.36-2.54c.59-.24 1.13-.56 1.62-.94l2.39.96c.22.08.47 0 .59-.22l1.92-3.32c.12-.22.07-.47-.12-.61l-2.01-1.58zM12 15.6c-1.98 0-3.6-1.62-3.6-3.6s1.62-3.6 3.6-3.6 3.6 1.62 3.6 3.6-1.62 3.6-3.6 3.6z"/></svg>
<div style="position:absolute;left:235px;top:508px;width:1647px;height:1px;background:#e6e6e6"></div>
<div class="t" style="left:245.40px;top:485.12px;font-size:13.08px;color:#44464f;letter-spacing:-0.061px;">K4-Jared-Desk-ES-000057</div>
<div style="position:absolute;left:405.2px;top:483.2px;width:15.3px;height:15.3px;border:1px solid #cfd6e4;border-radius:4px;box-sizing:content-box"></div>
<svg style="position:absolute;left:405.2px;top:483.2px" width="18" height="18" viewBox="0 0 18 18" fill="none" stroke="#4d77c6" stroke-width="1.15"><rect x="3.90" y="7.45" width="8.8" height="2.5" rx="1.25" transform="rotate(-46 8.3 8.7)"/><line x1="10.40" y1="7.45" x2="10.40" y2="9.95" transform="rotate(-46 8.3 8.7)" stroke-width="0.9"/><line x1="9.2" y1="12.1" x2="12.8" y2="12.1" stroke-width="1.4"/></svg>
<div class="t" style="left:728.90px;top:485.12px;font-size:13.08px;color:#44464f;transform:scaleX(0.9521);transform-origin:0 0;">ES1K25AAAAA000057</div>
<div class="t" style="left:931.30px;top:485.12px;font-size:13.08px;color:#44464f;transform:scaleX(0.9142);transform-origin:0 0;">v7.1.2.29</div>
<div style="position:absolute;left:1107px;top:488px;width:8px;height:8px;border-radius:50%;background:#2eb35a;box-shadow:0 0 4px #2eb35a"></div>
<div class="t" style="left:1123.90px;top:485.12px;font-size:13.08px;color:#1b1be6;transform:scaleX(0.9389);transform-origin:0 0;">Online</div>
<div class="t" style="left:1284.40px;top:485.12px;font-size:13.08px;color:#44464f;letter-spacing:-0.029px;">06/25/2025, 16:00:46</div>
<svg style="position:absolute;left:1554.2px;top:480.5px" width="24.7" height="24.7" viewBox="0 0 16 16" fill="#3b82f0"><path d="M4.715 6.542 3.343 7.914a3 3 0 1 0 4.243 4.243l1.828-1.829A3 3 0 0 0 8.586 5.5L8 6.086a1 1 0 0 0-.154.199 2 2 0 0 1 .861 3.337L6.88 11.45a2 2 0 1 1-2.83-2.83l.793-.792a4 4 0 0 1-.128-1.287z"/><path d="M6.586 4.672A3 3 0 0 0 7.414 9.5l.775-.776a2 2 0 0 1-.896-3.346L9.12 3.55a2 2 0 1 1 2.83 2.83l-.793.792c.112.42.155.855.128 1.287l1.372-1.372a3 3 0 1 0-4.243-4.243z"/></svg>
<svg style="position:absolute;left:1680.6px;top:480.9px" width="23.4" height="23.4" viewBox="0 0 24 24"><path fill="#244a8c" d="M19.14 12.94c.04-.3.06-.61.06-.94 0-.32-.02-.64-.07-.94l2.03-1.58a.49.49 0 0 0 .12-.61l-1.92-3.32a.488.488 0 0 0-.59-.22l-2.39.96c-.5-.38-1.03-.7-1.62-.94l-.36-2.54a.484.484 0 0 0-.48-.41h-3.84c-.24 0-.43.17-.47.41l-.36 2.54c-.59.24-1.13.57-1.62.94l-2.39-.96c-.22-.08-.47 0-.59.22L2.74 8.87c-.12.21-.08.47.12.61l2.03 1.58c-.05.3-.09.63-.09.94s.02.64.07.94l-2.03 1.58a.49.49 0 0 0-.12.61l1.92 3.32c.12.22.37.29.59.22l2.39-.96c.5.38 1.03.7 1.62.94l.36 2.54c.05.24.24.41.48.41h3.84c.24 0 .44-.17.47-.41l.36-2.54c.59-.24 1.13-.56 1.62-.94l2.39.96c.22.08.47 0 .59-.22l1.92-3.32c.12-.22.07-.47-.12-.61l-2.01-1.58zM12 15.6c-1.98 0-3.6-1.62-3.6-3.6s1.62-3.6 3.6-3.6 3.6 1.62 3.6 3.6-1.62 3.6-3.6 3.6z"/></svg>
<div class="t" style="left:245.40px;top:518.12px;font-size:13.08px;color:#44464f;">K4-Jared-Desk-ES-003849</div>
<div style="position:absolute;left:406.4px;top:516.2px;width:15.3px;height:15.3px;border:1px solid #cfd6e4;border-radius:4px;box-sizing:content-box"></div>
<svg style="position:absolute;left:406.4px;top:516.2px" width="18" height="18" viewBox="0 0 18 18" fill="none" stroke="#4d77c6" stroke-width="1.15"><rect x="3.90" y="7.45" width="8.8" height="2.5" rx="1.25" transform="rotate(-46 8.3 8.7)"/><line x1="10.40" y1="7.45" x2="10.40" y2="9.95" transform="rotate(-46 8.3 8.7)" stroke-width="0.9"/><line x1="9.2" y1="12.1" x2="12.8" y2="12.1" stroke-width="1.4"/></svg>
<div class="t" style="left:728.90px;top:518.12px;font-size:13.08px;color:#44464f;transform:scaleX(0.9384);transform-origin:0 0;">ES1K54BGBAB003849</div>
<div class="t" style="left:931.30px;top:518.12px;font-size:13.08px;color:#44464f;transform:scaleX(0.8288);transform-origin:0 0;">v7.1.5.14</div>
<div style="position:absolute;left:1107px;top:521px;width:8px;height:8px;border-radius:50%;background:#2eb35a;box-shadow:0 0 4px #2eb35a"></div>
<div class="t" style="left:1123.90px;top:518.12px;font-size:13.08px;color:#1b1be6;transform:scaleX(0.9389);transform-origin:0 0;">Online</div>
<div class="t" style="left:1284.40px;top:518.12px;font-size:13.08px;color:#44464f;letter-spacing:-0.029px;">06/25/2025, 16:00:45</div>
<svg style="position:absolute;left:1554.2px;top:513.5px" width="24.7" height="24.7" viewBox="0 0 16 16" fill="#3b82f0"><path d="M4.715 6.542 3.343 7.914a3 3 0 1 0 4.243 4.243l1.828-1.829A3 3 0 0 0 8.586 5.5L8 6.086a1 1 0 0 0-.154.199 2 2 0 0 1 .861 3.337L6.88 11.45a2 2 0 1 1-2.83-2.83l.793-.792a4 4 0 0 1-.128-1.287z"/><path d="M6.586 4.672A3 3 0 0 0 7.414 9.5l.775-.776a2 2 0 0 1-.896-3.346L9.12 3.55a2 2 0 1 1 2.83 2.83l-.793.792c.112.42.155.855.128 1.287l1.372-1.372a3 3 0 1 0-4.243-4.243z"/></svg>
<svg style="position:absolute;left:1680.6px;top:513.9px" width="23.4" height="23.4" viewBox="0 0 24 24"><path fill="#244a8c" d="M19.14 12.94c.04-.3.06-.61.06-.94 0-.32-.02-.64-.07-.94l2.03-1.58a.49.49 0 0 0 .12-.61l-1.92-3.32a.488.488 0 0 0-.59-.22l-2.39.96c-.5-.38-1.03-.7-1.62-.94l-.36-2.54a.484.484 0 0 0-.48-.41h-3.84c-.24 0-.43.17-.47.41l-.36 2.54c-.59.24-1.13.57-1.62.94l-2.39-.96c-.22-.08-.47 0-.59.22L2.74 8.87c-.12.21-.08.47.12.61l2.03 1.58c-.05.3-.09.63-.09.94s.02.64.07.94l-2.03 1.58a.49.49 0 0 0-.12.61l1.92 3.32c.12.22.37.29.59.22l2.39-.96c.5.38 1.03.7 1.62.94l.36 2.54c.05.24.24.41.48.41h3.84c.24 0 .44-.17.47-.41l.36-2.54c.59-.24 1.13-.56 1.62-.94l2.39.96c.22.08.47 0 .59-.22l1.92-3.32c.12-.22.07-.47-.12-.61l-2.01-1.58zM12 15.6c-1.98 0-3.6-1.62-3.6-3.6s1.62-3.6 3.6-3.6 3.6 1.62 3.6 3.6-1.62 3.6-3.6 3.6z"/></svg>
</body></html>
